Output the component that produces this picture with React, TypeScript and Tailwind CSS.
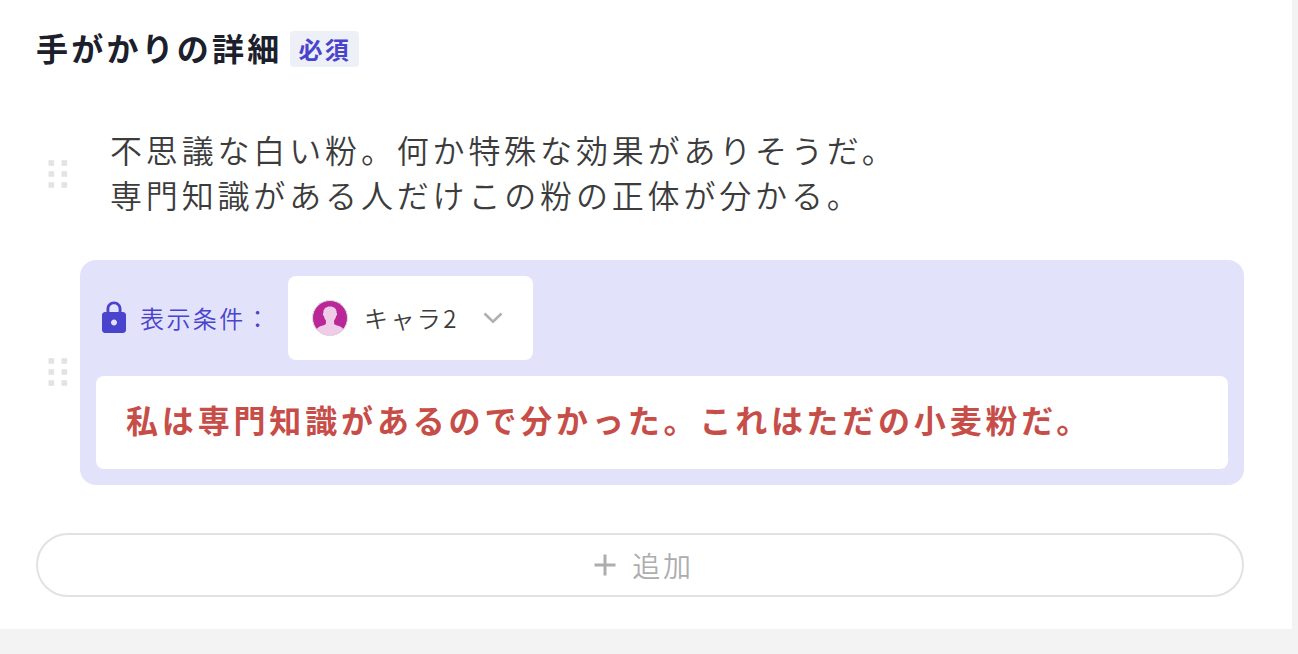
import React, { useState } from 'react';
import { MdLock } from 'react-icons/md';

const DragHandle: React.FC = () => (
  <button type="button" aria-label="並べ替え" className="flex w-11 shrink-0 cursor-grab items-center justify-center">
    <svg width="20" height="30" viewBox="0 0 20 30" fill="#e3e3e3" aria-hidden="true">
      {[0, 11, 22].map((y) => (
        <React.Fragment key={y}>
          <rect x="0.5" y={y + 0.2} width="5.6" height="5.6" />
          <rect x="13.5" y={y + 0.2} width="5.6" height="5.6" />
        </React.Fragment>
      ))}
    </svg>
  </button>
);

const Avatar: React.FC = () => (
  <svg
    width="36"
    height="36"
    viewBox="0 0 36 36"
    aria-hidden="true"
    className="pointer-events-none absolute top-1/2 left-6 -translate-y-1/2"
  >
    <clipPath id="avatar-clip">
      <circle cx="18" cy="18" r="17.3" />
    </clipPath>
    <circle cx="18" cy="18" r="17.5" fill="#b92896" stroke="#dcdcdc" strokeWidth="1" />
    <g clipPath="url(#avatar-clip)" fill="#efcde8">
      <path d="M18 6.600c-4.400 0-6.900 2.600-6.600 6.400-.8.4-.6 2.600.5 3 .3 1.900 1 3.200 2 4.200v3.600c-1 1.600-3.300 1.700-5.500 2.500-2.300.8-3.600 2.200-4.400 4.700v6h28v-6c-.8-2.500-2.100-3.900-4.400-4.700-2.200-.8-4.500-.9-5.500-2.500v-3.600c1-1 1.700-2.300 2-4.200 1.100-.4 1.300-2.600.5-3 .3-3.800-2.200-6.400-6.600-6.400z" />
    </g>
  </svg>
);

const App: React.FC = () => {
  const [detail, setDetail] = useState(
    '不思議な白い粉。何か特殊な効果がありそうだ。\n専門知識がある人だけこの粉の正体が分かる。'
  );
  const [secret, setSecret] = useState('私は専門知識があるので分かった。これはただの小麦粉だ。');

  return (
    <div className="min-h-screen bg-[#f3f3f3] pr-1.5 pb-6 font-['Noto_Sans_CJK_JP',sans-serif] text-[#3c3c3c]">
      <main className="bg-white pt-6 pr-12 pb-8 pl-9">
        <div className="flex items-center gap-2 pb-1">
          <h2 className="text-[32px] leading-[46px] font-bold tracking-widest text-[#1c202c]">手がかりの詳細</h2>
          <span className="mt-1 rounded bg-[#edf0f6] px-2 text-2xl leading-9 font-bold tracking-widest text-[#4a43cd]">
            必須
          </span>
        </div>

        <div className="mt-8 flex flex-col gap-4">
          <div className="flex">
            <DragHandle />
            <textarea
              aria-label="手がかりの詳細"
              rows={2}
              value={detail}
              onChange={(e) => setDetail(e.target.value)}
              className="block min-w-0 flex-1 resize-none bg-white px-[30px] pt-[21px] pb-[27px] text-[32px] leading-[45px] font-[350] tracking-[0.12em] outline-none"
            />
          </div>

          <div className="flex">
            <DragHandle />
            <div className="flex min-w-0 flex-1 flex-col gap-4 rounded-2xl bg-[#e2e2fb] p-4">
              <div className="flex items-center">
                <label
                  htmlFor="condition"
                  className="flex items-center gap-2 text-2xl font-[350] tracking-widest text-[#4a43cd]"
                >
                  <MdLock size={36} aria-hidden="true" />
                  表示条件：
                </label>
                <div className="relative ml-4">
                  <select
                    id="condition"
                    className="h-[84px] w-[245px] appearance-none rounded-lg bg-white pr-16 pl-[76px] text-2xl font-[350] tracking-widest outline-none"
                  >
                    <option>キャラ2</option>
                  </select>
                  <Avatar />
                  <svg
                    width="20"
                    height="12"
                    viewBox="0 0 20 12"
                    fill="none"
                    stroke="#b0b0b0"
                    strokeWidth="2.6"
                    aria-hidden="true"
                    className="pointer-events-none absolute top-1/2 right-[30px] -translate-y-1/2"
                  >
                    <path d="M1.500 1.500 10 9.800l8.500-8.300" />
                  </svg>
                </div>
              </div>
              <textarea
                aria-label="条件付きの詳細"
                rows={1}
                value={secret}
                onChange={(e) => setSecret(e.target.value)}
                className="block w-full resize-none rounded-lg bg-white px-[30px] pt-[21px] pb-[27px] text-[32px] leading-[45px] font-bold tracking-[0.12em] text-[#c74e48] outline-none"
              />
            </div>
          </div>
        </div>

        <button
          type="button"
          className="mt-12 flex h-16 w-full items-center justify-center gap-4 rounded-full border-2 border-[#e2e2e2] pl-2 text-[28px] font-[350] tracking-widest text-[#adadad]"
        >
          <svg width="22" height="22" viewBox="0 0 22 22" stroke="currentColor" strokeWidth="3" aria-hidden="true">
            <path d="M11 .5v21M.5 11h21" />
          </svg>
          追加
        </button>
      </main>
    </div>
  );
};

export default App;
